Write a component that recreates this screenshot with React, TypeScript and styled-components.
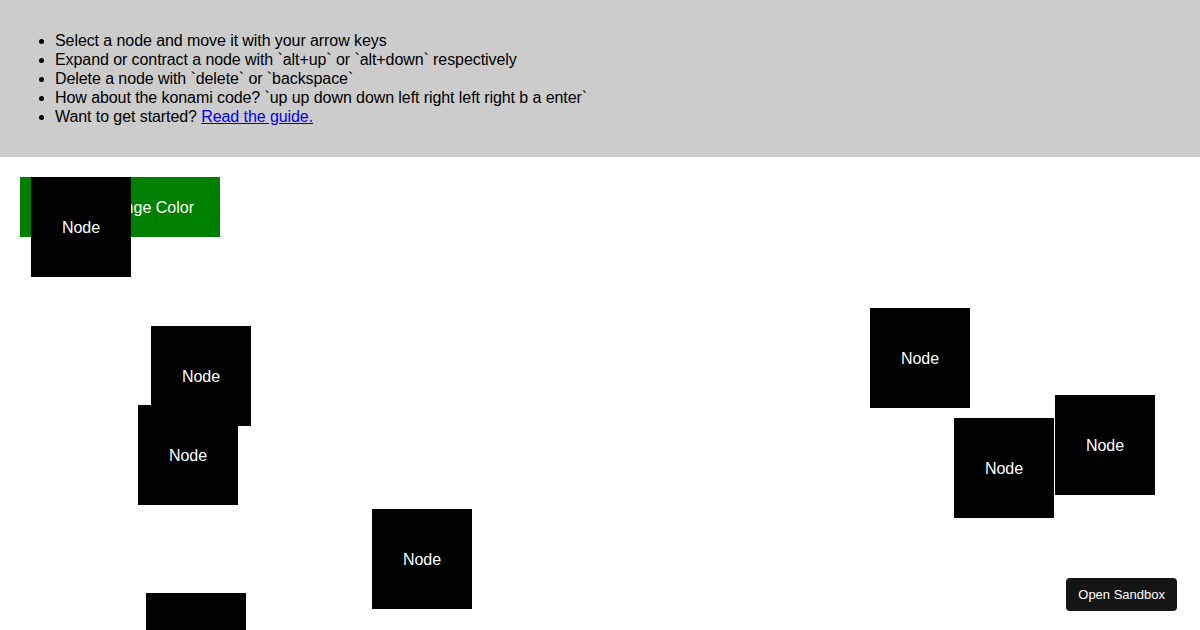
import React from 'react'
import styled, { createGlobalStyle } from 'styled-components'

const GlobalStyle = createGlobalStyle`
    html, body {
        margin: 0;
        padding: 0;
        background: #fff;
        font-family: 'Liberation Sans', Arial, sans-serif;
        overflow: hidden;
    }
`

const Header = styled.header`
    background-color: #cccccc;
    padding: 15px;
    color: #000;
    font-size: 16px;
`

const Tips = styled.ul`
    margin: 16px 0;
    padding-left: 40px;
    line-height: 19px;
    letter-spacing: -0.08px;
`

const GuideLink = styled.a`
    color: #0000ee;
    text-decoration: underline;
`

const Canvas = styled.main`
    position: relative;
    height: 473px;
    padding: 20px;
    box-sizing: border-box;
`

const ColorButton = styled.button`
    display: flex;
    align-items: center;
    justify-content: flex-end;
    width: 200px;
    height: 60px;
    padding: 1px 26px 0 0;
    border: none;
    background-color: #008000;
    color: #fff;
    font-family: 'Liberation Sans', Arial, sans-serif;
    font-size: 16px;
`

const Node = styled.div<{ x: number; y: number }>`
    position: absolute;
    left: ${({ x }) => x}px;
    top: ${({ y }) => y}px;
    width: 100px;
    height: 100px;
    box-sizing: border-box;
    padding-top: 2px;
    display: flex;
    align-items: center;
    justify-content: center;
    background-color: #000;
    color: #fff;
    font-size: 16px;
`

const SandboxButton = styled.a`
    position: fixed;
    right: 23px;
    bottom: 19px;
    height: 33px;
    padding: 0 12px;
    display: flex;
    align-items: center;
    border-radius: 4px;
    background-color: #151515;
    color: #fff;
    font-family: 'Liberation Sans', Arial, sans-serif;
    font-size: 13px;
    text-decoration: none;
`

// node positions, relative to the canvas
const nodes = [
    { x: 31, y: 20 },
    { x: 151, y: 169 },
    { x: 138, y: 248 },
    { x: 372, y: 352 },
    { x: 146, y: 436 },
    { x: 870, y: 151 },
    { x: 954, y: 261 },
    { x: 1055, y: 238 },
]

const App = () => {
    return (
        <>
            <GlobalStyle />
            <Header>
                <Tips>
                    <li>Select a node and move it with your arrow keys</li>
                    <li>Expand or contract a node with `alt+up` or `alt+down` respectively</li>
                    <li>Delete a node with `delete` or `backspace`</li>
                    <li>How about the konami code? `up up down down left right left right b a enter`</li>
                    <li>Want to get started? <GuideLink href="#">Read the guide.</GuideLink></li>
                </Tips>
            </Header>
            <Canvas>
                <ColorButton>Change Color</ColorButton>
                {nodes.map((n, i) => (
                    <Node key={i} x={n.x} y={n.y}>Node</Node>
                ))}
            </Canvas>
            <SandboxButton href="#">Open Sandbox</SandboxButton>
        </>
    )
}

export default App
